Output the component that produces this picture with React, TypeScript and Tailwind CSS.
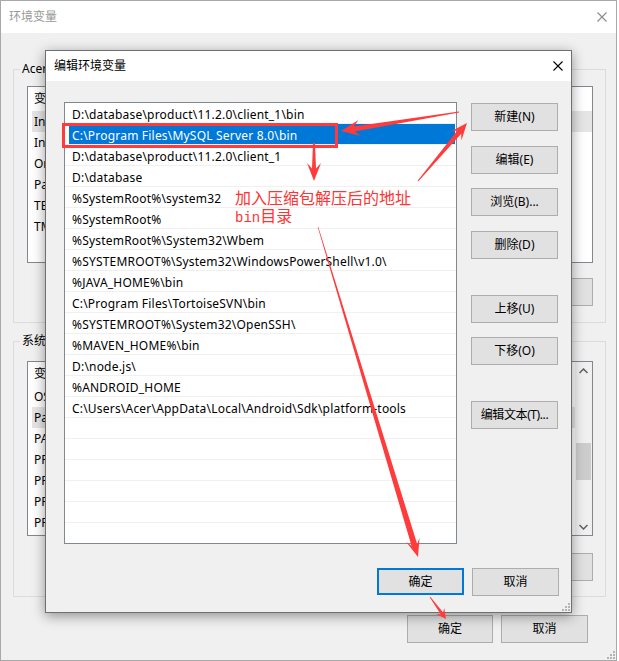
import React from 'react';

const ui = "font-['Noto_Sans','Noto_Sans_CJK_SC',sans-serif]";

const pathRows = [
  'D:\\database\\product\\11.2.0\\client_1\\bin',
  'C:\\Program Files\\MySQL Server 8.0\\bin',
  'D:\\database\\product\\11.2.0\\client_1',
  'D:\\database',
  '%SystemRoot%\\system32',
  '%SystemRoot%',
  '%SystemRoot%\\System32\\Wbem',
  '%SYSTEMROOT%\\System32\\WindowsPowerShell\\v1.0\\',
  '%JAVA_HOME%\\bin',
  'C:\\Program Files\\TortoiseSVN\\bin',
  '%SYSTEMROOT%\\System32\\OpenSSH\\',
  '%MAVEN_HOME%\\bin',
  'D:\\node.js\\',
  '%ANDROID_HOME',
  'C:\\Users\\Acer\\AppData\\Local\\Android\\Sdk\\platform-tools',
];

const userVars = [
  ['IntelliJ IDEA', 'D:\\IntelliJ IDEA\\bin;'],
  ['IntelliJ IDEA CE', 'D:\\IntelliJ IDEA CE\\bin;'],
  ['OneDrive', 'C:\\Users\\Acer\\OneDrive'],
  ['Path', 'C:\\Users\\Acer\\AppData\\Local\\...'],
  ['TEMP', '%USERPROFILE%\\AppData\\Local\\Temp'],
  ['TMP', '%USERPROFILE%\\AppData\\Local\\Temp'],
];

const sysVars = [
  ['OS', 'Windows_NT'],
  ['Path', 'D:\\database\\product\\11.2.0\\...'],
  ['PATHEXT', '.COM;.EXE;.BAT;.CMD;.VBS;.VBE'],
  ['PROCESSOR_ARCHITECTURE', 'AMD64'],
  ['PROCESSOR_IDENTIFIER', 'Intel64 Family 6 Model 142'],
  ['PROCESSOR_LEVEL', '6'],
  ['PROCESSOR_REVISION', '8e0a'],
];

function Btn({ children, className = '' }: { children?: React.ReactNode; className?: string }) {
  return (
    <div
      className={`flex h-[28px] items-center justify-center whitespace-nowrap border border-[#adadad] bg-[#e1e1e1] text-[12px] text-black ${className}`}
    >
      {children}
    </div>
  );
}

function CloseX({ color }: { color: string }) {
  return (
    <svg width="10" height="10" viewBox="0 0 10 10">
      <path d="M0.5 0.5L9.5 9.5M9.5 0.5L0.5 9.5" stroke={color} strokeWidth="1.1" />
    </svg>
  );
}

function Grip() {
  return (
    <svg width="8" height="8" viewBox="0 0 8 8">
      <g fill="#b4b4b4">
        <rect x="6" y="0" width="2" height="2" />
        <rect x="3" y="3" width="2" height="2" />
        <rect x="6" y="3" width="2" height="2" />
        <rect x="0" y="6" width="2" height="2" />
        <rect x="3" y="6" width="2" height="2" />
        <rect x="6" y="6" width="2" height="2" />
      </g>
    </svg>
  );
}

// tapered screenshot-style arrow, thin at the tail and thick near the head
function arrowPoints(
  x1: number,
  y1: number,
  x2: number,
  y2: number,
  tail: number,
  neck: number,
  hl: number,
  hw: number
) {
  const dx = x2 - x1;
  const dy = y2 - y1;
  const len = Math.hypot(dx, dy);
  const ux = dx / len;
  const uy = dy / len;
  const nx = -uy;
  const ny = ux;
  const bx = x2 - ux * hl;
  const by = y2 - uy * hl;
  const cx = bx + ux * hl * 0.3;
  const cy = by + uy * hl * 0.3;
  const pts = [
    [x1 + (nx * tail) / 2, y1 + (ny * tail) / 2],
    [cx + (nx * neck) / 2, cy + (ny * neck) / 2],
    [bx + nx * hw, by + ny * hw],
    [x2, y2],
    [bx - nx * hw, by - ny * hw],
    [cx - (nx * neck) / 2, cy - (ny * neck) / 2],
    [x1 - (nx * tail) / 2, y1 - (ny * tail) / 2],
  ];
  return pts.map((p) => p[0].toFixed(1) + ',' + p[1].toFixed(1)).join(' ');
}

function VarList({
  rows,
  highlight,
  scroll,
  className = '',
}: {
  rows: string[][];
  highlight: number;
  scroll?: boolean;
  className?: string;
}) {
  return (
    <div className={`flex border border-[#828790] bg-white ${className}`}>
      <div className="flex min-w-0 flex-1 flex-col overflow-hidden">
        <div className="flex h-[24px] items-center pl-[6px] text-[12px] text-black">
          <span className="w-[170px]">变量</span>
          <span>值</span>
        </div>
        {rows.map((r, i) => (
          <div key={i} className="flex h-[21px] pl-[4px]">
            <div
              className={`flex flex-1 items-center whitespace-nowrap pl-[2px] text-[12px] text-black ${
                i === highlight ? 'bg-[#e5e5e5]' : ''
              }`}
            >
              <span className="w-[170px]">{r[0]}</span>
              <span>{r[1]}</span>
            </div>
          </div>
        ))}
      </div>
      {scroll && (
        <div className="flex w-[17px] flex-col items-center bg-[#f0f0f0]">
          <div className="flex h-[17px] items-center justify-center">
            <svg width="9" height="6" viewBox="0 0 9 6">
              <path d="M0.5 5L4.5 1L8.5 5" stroke="#606060" strokeWidth="1.5" fill="none" />
            </svg>
          </div>
          <div className="mt-[64px] h-[37px] w-[15px] bg-[#cdcdcd]" />
          <div className="flex-1" />
          <div className="flex h-[17px] items-center justify-center">
            <svg width="9" height="6" viewBox="0 0 9 6">
              <path d="M0.5 1L4.5 5L8.5 1" stroke="#606060" strokeWidth="1.5" fill="none" />
            </svg>
          </div>
        </div>
      )}
    </div>
  );
}

export default function App() {
  const emptyRows = Array.from({ length: 21 - pathRows.length }, () => '');
  const allRows = [...pathRows, ...emptyRows];

  return (
    <div className={`relative h-[661px] w-[619px] overflow-hidden bg-white ${ui}`}>
      {/* back window: 环境变量 */}
      <div className="relative flex h-[661px] w-[617px] flex-col border border-[#a8a8a8] bg-[#f0f0f0]">
        <div className="flex h-[32px] items-center justify-between bg-white pl-[8px] pr-[9px] text-[12px] text-[#999999]">
          <span>环境变量</span>
          <CloseX color="#8a8a8a" />
        </div>

        <div className="ml-[12px] mt-[36px] flex w-[593px] flex-col border border-[#dcdcdc]">
          <span className="-mt-[9px] ml-[6px] w-fit bg-[#f0f0f0] px-[2px] text-[12px] leading-[16px] text-black">
            Acer 的用户变量(U)
          </span>
          <VarList rows={userVars} highlight={0} className="ml-[13px] mt-[9px] h-[177px] w-[566px]" />
          <div className="mr-[12px] mt-[15px] flex justify-end gap-[9px]">
            <Btn className="w-[86px]">新建(N)...</Btn>
            <Btn className="w-[86px]">编辑(E)...</Btn>
            <Btn className="w-[86px]">删除(D)</Btn>
          </div>
          <div className="h-[16px]" />
        </div>

        <div className="ml-[12px] mt-[18px] flex w-[593px] flex-col border border-[#dcdcdc]">
          <span className="-mt-[9px] ml-[6px] w-fit bg-[#f0f0f0] px-[2px] text-[12px] leading-[16px] text-black">
            系统变量(S)
          </span>
          <VarList rows={sysVars} highlight={1} scroll className="ml-[13px] mt-[12px] h-[175px] w-[566px]" />
          <div className="mr-[12px] mt-[17px] flex justify-end gap-[9px]">
            <Btn className="w-[86px]">新建(W)...</Btn>
            <Btn className="w-[86px]">编辑(I)...</Btn>
            <Btn className="w-[86px]">删除(L)</Btn>
          </div>
          <div className="h-[15px]" />
        </div>

        <div className="mr-[28px] mt-[18px] flex justify-end gap-[8px]">
          <Btn className="w-[86px]">确定</Btn>
          <Btn className="w-[87px]">取消</Btn>
        </div>

        <div className="absolute bottom-[1px] right-[1px]">
          <Grip />
        </div>
      </div>

      {/* front dialog: 编辑环境变量 */}
      <div className="absolute left-[45px] top-[50px] flex h-[563px] w-[527px] flex-col border border-[#6f6f6f] bg-[#f0f0f0] shadow-[0_3px_12px_rgba(0,0,0,0.4)]">
        <div className="flex h-[30px] items-center justify-between bg-white pl-[8px] pr-[8px] text-[12px] text-black">
          <span>编辑环境变量</span>
          <CloseX color="#000000" />
        </div>

        <div className="flex">
          <div className="ml-[18px] mt-[21px] flex h-[442px] w-[393px] flex-col overflow-hidden border border-[#828790] bg-white">
            {allRows.map((t, i) => (
              <div key={i} className="flex h-[21px] shrink-0 border-b border-[#f0f0f0] pl-[4px] pr-[1px]">
                <div
                  className={`flex flex-1 items-center whitespace-nowrap pl-[3px] pt-[3px] text-[12px] tracking-[0.2px] ${
                    i === 1 ? 'bg-[#0078d7] text-white' : 'text-black'
                  }`}
                >
                  {t}
                </div>
              </div>
            ))}
          </div>

          <div className="ml-[14px] flex w-[87px] flex-col">
            <Btn className="mt-[22px]">新建(N)</Btn>
            <Btn className="mt-[15px]">编辑(E)</Btn>
            <Btn className="mt-[14px]">浏览(B)...</Btn>
            <Btn className="mt-[15px]">删除(D)</Btn>
            <Btn className="mt-[36px]">上移(U)</Btn>
            <Btn className="mt-[14px]">下移(O)</Btn>
            <Btn className="mt-[36px] tracking-[-0.4px]">编辑文本(T)...</Btn>
          </div>
        </div>

        <div className="mr-[12px] mt-[24px] flex justify-end gap-[8px]">
          <div className="flex h-[27px] w-[87px] items-center justify-center border-2 border-[#0078d7] bg-[#e1e1e1] text-[12px] text-black">
            确定
          </div>
          <Btn className="h-[27px] w-[87px]">取消</Btn>
        </div>

        <div className="absolute bottom-[1px] right-[1px]">
          <Grip />
        </div>
      </div>

      {/* red annotations */}
      <div className="absolute left-[235px] top-[188px] text-[16px] leading-[18px] text-[#ff3333] font-['Noto_Sans_CJK_SC',sans-serif]">
        <div>加入压缩包解压后的地址</div>
        <div>
          <span className="font-['Liberation_Mono',monospace] text-[14px]">bin</span>目录
        </div>
      </div>

      <svg className="pointer-events-none absolute left-0 top-0" width="619" height="661" viewBox="0 0 619 661">
        <rect x="63.5" y="124.5" width="273" height="22" fill="none" stroke="#ff3b3b" strokeWidth="3" />
        <g fill="#ff3b3b">
          <polygon points={arrowPoints(459, 112, 341, 131, 1, 5, 19, 8)} />
          <polygon points={arrowPoints(418, 181, 467, 123, 1, 5, 17, 7)} />
          <polygon points={arrowPoints(314, 143, 314, 181, 2, 4, 18, 7)} />
          <polygon points={arrowPoints(318, 227, 418, 557, 0.6, 6, 18, 7)} />
          <polygon points={arrowPoints(430, 597, 446, 619, 0.8, 3, 10, 5)} />
        </g>
      </svg>
    </div>
  );
}
